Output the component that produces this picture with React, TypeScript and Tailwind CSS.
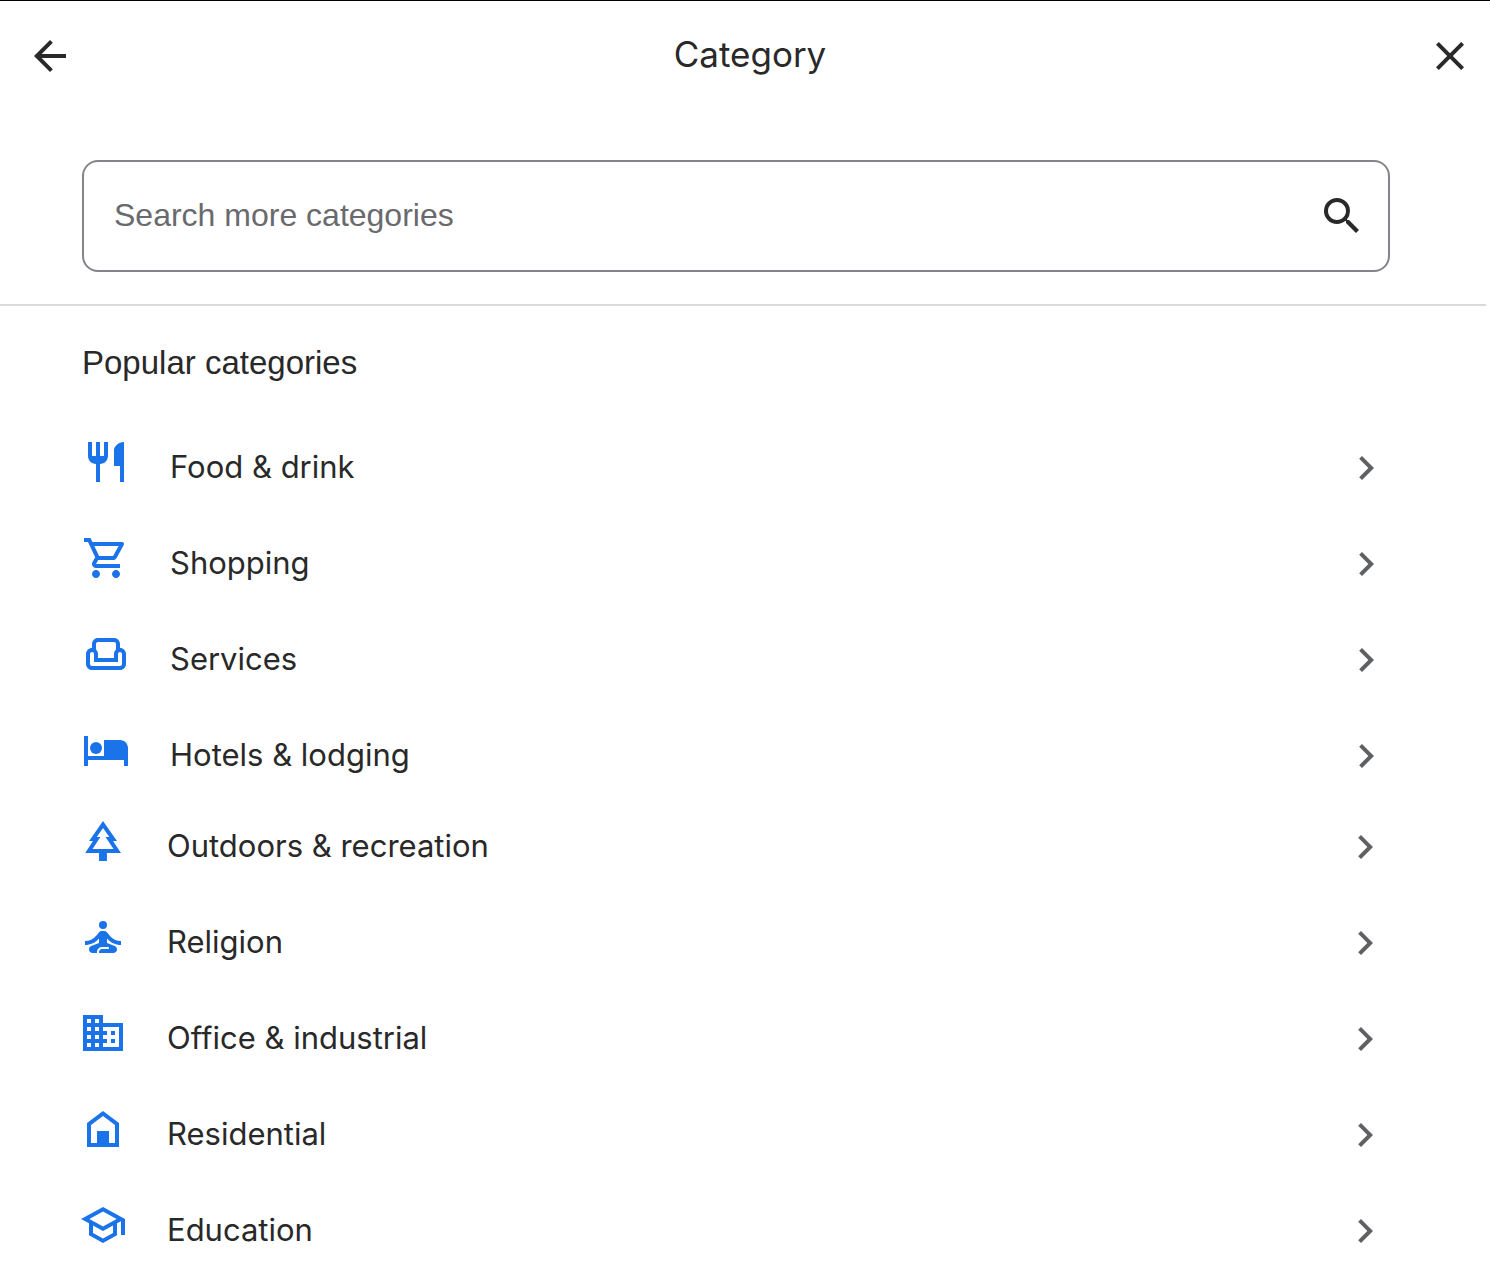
import type { ReactNode } from 'react';

type Category = { label: string; icon: ReactNode };

const topCategories: Category[] = [
  {
    label: 'Food & drink',
    icon: (
      <path d="M3 2v7c0 2.21 1.79 4 4 4v9h2v-9c2.21 0 4-1.79 4-4V2h-2v7H9V2H7v7H5V2H3zm13 4v8h3v8h2V2c-2.76 0-5 2.24-5 4z" />
    ),
  },
  {
    label: 'Shopping',
    icon: (
      <path d="M15.55 13c.75 0 1.41-.41 1.75-1.03l3.58-6.49A.996.996 0 0 0 20.01 4H5.21l-.94-2H1v2h2l3.6 7.59-1.35 2.44C4.52 15.37 5.48 17 7 17h12v-2H7l1.1-2h7.45zM6.16 6h12.15l-2.76 5H8.53L6.16 6zM7 18c-1.1 0-1.99.9-1.99 2S5.9 22 7 22s2-.9 2-2-.9-2-2-2zm10 0c-1.1 0-1.99.9-1.99 2s.89 2 1.99 2 2-.9 2-2-.9-2-2-2z" />
    ),
  },
  {
    label: 'Services',
    icon: (
      <path
        fillRule="evenodd"
        d="M8 4h8c1.65 0 3 1.35 3 3v2c1.65 0 3 1.35 3 3v5c0 1.65-1.35 3-3 3H5c-1.65 0-3-1.35-3-3v-5c0-1.65 1.35-3 3-3V7c0-1.65 1.35-3 3-3zm0 2c-.55 0-1 .45-1 1v2.78c.61.55 1 1.34 1 2.22v2h8v-2c0-.88.39-1.67 1-2.22V7c0-.55-.45-1-1-1H8zm-3 5c-.55 0-1 .45-1 1v5c0 .55.45 1 1 1h14c.55 0 1-.45 1-1v-5c0-.55-.45-1-1-1s-1 .45-1 1v4H6v-4c0-.55-.45-1-1-1z"
      />
    ),
  },
  {
    label: 'Hotels & lodging',
    icon: (
      <>
        <circle cx="7" cy="11" r="3" />
        <path d="M1 5v15h2v-3h18v3h2v-9c0-2.21-1.79-4-4-4h-8v8H3V5H1z" />
      </>
    ),
  },
];

const moreCategories: Category[] = [
  {
    label: 'Outdoors & recreation',
    icon: (
      <path d="M17 12h2L12 2 5.05 12H7l-3.9 6h6.92v4h3.95v-4H21l-4-6zM6.79 16l3.9-6H8.88l3.13-4.5 3.15 4.5h-1.9l4 6H6.79z" />
    ),
  },
  {
    label: 'Religion',
    icon: (
      <>
        <circle cx="12" cy="6" r="2" />
        <path d="M21 16v-2c-2.24 0-4.16-.96-5.6-2.68l-1.34-1.6A1.98 1.98 0 0 0 12.53 9h-1.05c-.59 0-1.15.26-1.53.72l-1.34 1.6C7.16 13.04 5.24 14 3 14v2c2.77 0 5.19-1.17 7-3.25V15l-3.88 1.55c-.67.27-1.12.93-1.12 1.66C5 19.2 5.8 20 6.79 20H9v-.5a2.5 2.5 0 0 1 2.5-2.5h3c.28 0 .5.22.5.5s-.22.5-.5.5h-3c-.83 0-1.5.67-1.5 1.5v.5h7.1c.99 0 1.9-.8 1.9-1.79 0-.73-.45-1.39-1.12-1.66L14 15v-2.25c1.81 2.08 4.23 3.25 7 3.25z" />
      </>
    ),
  },
  {
    label: 'Office & industrial',
    icon: (
      <path d="M12 7V3H2v18h20V7H12zM6 19H4v-2h2v2zm0-4H4v-2h2v2zm0-4H4V9h2v2zm0-4H4V5h2v2zm4 12H8v-2h2v2zm0-4H8v-2h2v2zm0-4H8V9h2v2zm0-4H8V5h2v2zm10 12h-8v-2h2v-2h-2v-2h2v-2h-2V9h8v10zm-2-8h-2v2h2v-2zm0 4h-2v2h2v-2z" />
    ),
  },
  {
    label: 'Residential',
    icon: <path d="M12 3L4 9v12h16V9l-8-6zm6 16h-3v-6H9v6H6v-9l6-4.5 6 4.5v9z" />,
  },
  {
    label: 'Education',
    icon: (
      <path d="M12 3L1 9l4 2.18v6L12 21l7-3.82v-6l2-1.09V17h2V9L12 3zm6.82 6L12 12.72 5.18 9 12 5.28 18.82 9zM17 15.99l-5 2.73-5-2.73v-3.72L12 15l5-2.73v3.72z" />
    ),
  },
];

function Icon({ children }: { children: ReactNode }) {
  return (
    <svg viewBox="0 0 24 24" fill="currentColor" aria-hidden="true" className="size-12 shrink-0">
      {children}
    </svg>
  );
}

function CategoryRow({ label, icon }: Category) {
  return (
    <li>
      <button type="button" className="flex h-24 w-full items-center text-left">
        <span className="pb-3 text-[#1a73e8]">
          <Icon>{icon}</Icon>
        </span>
        <span className="ml-10 flex-1 pb-0.5 text-[31px] leading-10">{label}</span>
        <span className="text-[#5f6063]">
          <Icon>
            <path d="M10 6L8.59 7.41 13.17 12l-4.58 4.59L10 18l6-6z" />
          </Icon>
        </span>
      </button>
    </li>
  );
}

export default function App() {
  return (
    <main className="min-h-screen border-t border-black bg-white font-[Inter,sans-serif] text-[#292929]">
      <header className="flex items-center justify-between pt-[31px] pr-4 pl-[26px]">
        <button type="button" aria-label="Back">
          <Icon>
            <path d="M20 11H7.83l5.59-5.59L12 4l-8 8 8 8 1.41-1.41L7.83 13H20v-2z" />
          </Icon>
        </button>
        <h1 className="pb-1 text-[35px] leading-11">Category</h1>
        <button type="button" aria-label="Close">
          <Icon>
            <path d="M19 6.41L17.59 5 12 10.59 6.41 5 5 6.41 10.59 12 5 17.59 6.41 19 12 13.41 17.59 19 19 17.59 13.41 12z" />
          </Icon>
        </button>
      </header>

      <form role="search" className="mt-20 mr-[100px] ml-[82px] flex h-28 items-center rounded-2xl border-2 border-[#848588] pr-[22px] pl-[30px]">
        <input
          type="text"
          aria-label="Search more categories"
          placeholder="Search more categories"
          className="min-w-0 flex-1 bg-transparent pb-0.5 font-['Liberation_Sans',Arial,sans-serif] text-[32px] leading-10 outline-none placeholder:text-[#696a6d]"
        />
        <button type="submit" aria-label="Search">
          <Icon>
            <path d="M15.5 14h-.79l-.28-.27A6.471 6.471 0 0 0 16 9.5 6.5 6.5 0 1 0 9.5 16c1.61 0 3.09-.59 4.23-1.57l.27.28v.79l5 4.99L20.49 19l-4.99-5zm-6 0C7.01 14 5 11.99 5 9.5S7.01 5 9.5 5 14 7.01 14 9.5 11.99 14 9.5 14z" />
          </Icon>
        </button>
      </form>

      <hr className="mt-8 mr-1 border-t-2 border-[#dadada]" />

      <section>
        <h2 className="flex h-[114px] items-center pl-[82px] font-['Liberation_Sans',Arial,sans-serif] text-[33px] leading-10">
          Popular categories
        </h2>
        <ul className="pr-[100px] pl-[82px]">
          {topCategories.map((c) => (
            <CategoryRow key={c.label} {...c} />
          ))}
        </ul>
        <ul className="-mt-[5px] pr-[101px] pl-[79px]">
          {moreCategories.map((c) => (
            <CategoryRow key={c.label} {...c} />
          ))}
        </ul>
      </section>
    </main>
  );
}
